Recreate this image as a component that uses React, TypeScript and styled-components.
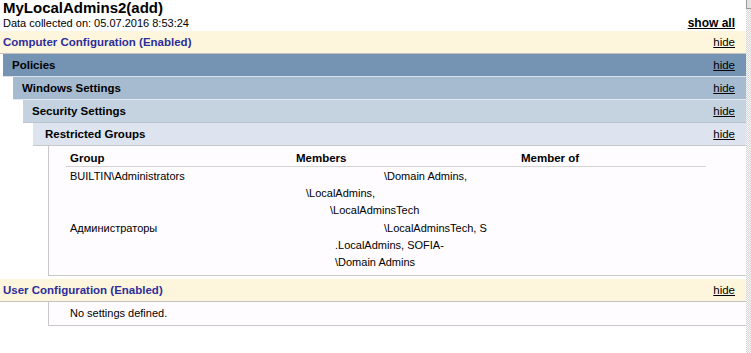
import React from 'react';
import styled, { createGlobalStyle } from 'styled-components';

const GlobalStyle = createGlobalStyle`
  html, body {
    margin: 0;
    padding: 0;
    background: #ffffff;
    overflow: hidden;
  }
  body {
    font-family: 'Liberation Sans', Arial, sans-serif;
    font-size: 11px;
    color: #000000;
  }
`;

const Page = styled.div`
  display: flex;
  width: 751px;
  height: 353px;
  overflow: hidden;
`;

const Report = styled.div`
  flex: 1;
  display: flex;
  flex-direction: column;
  min-width: 0;
`;

const ScrollTrack = styled.div`
  width: 5px;
  display: flex;
  flex-direction: column;
  background-color: #f4f4f4;
  background-image: repeating-conic-gradient(#d6d6d6 0% 25%, #f7f7f7 0% 50%);
  background-size: 2px 2px;
`;

const ScrollButton = styled.div`
  height: 8px;
  background: #e2e2e2;
  border-left: 1px solid #9a9a9a;
  border-bottom: 1px solid #9a9a9a;
`;

const Title = styled.div`
  font-size: 15px;
  font-weight: bold;
  line-height: 16px;
  padding-left: 3px;
  color: #000;
`;

const MetaRow = styled.div`
  display: flex;
  justify-content: space-between;
  align-items: flex-end;
  height: 14px;
  padding: 0 11px 0 3px;
  line-height: 14px;
`;

const ShowAll = styled.a`
  font-weight: bold;
  font-size: 12px;
  color: #000;
  text-decoration: underline;
`;

const Heading = styled.div<{ $indent: number; $bg: string; $pad: number; $tone?: string }>`
  display: flex;
  justify-content: space-between;
  align-items: center;
  height: 22px;
  margin-left: ${(p) => p.$indent}px;
  padding: 0 11px 0 ${(p) => p.$pad}px;
  background: ${(p) => p.$bg};
  border-bottom: 1px solid ${(p) => p.$tone || '#c4c4c4'};
  font-weight: bold;
  font-size: 11.5px;
`;

const Label = styled.span<{ $color?: string }>`
  color: ${(p) => p.$color || '#000'};
`;

const Hide = styled.a`
  font-weight: normal;
  font-size: 11.5px;
  color: #000;
  text-decoration: underline;
`;

const Section = styled.div<{ $gap?: number }>`
  margin-top: ${(p) => p.$gap || 0}px;
  display: flex;
  flex-direction: column;
`;

const Body = styled.div`
  margin-left: 48px;
  background: #fffcff;
  border-left: 1px solid #c8c8c8;
  border-bottom: 1px solid #c8c8c8;
  padding: 4px 0 4px 17px;
`;

const Table = styled.div`
  display: grid;
  grid-template-columns: 226px 225px 1fr;
  margin-right: 40px;
`;

const HeadCell = styled.div`
  font-weight: bold;
  font-size: 11.5px;
  line-height: 16px;
  padding: 0 0 0 4px;
  border-bottom: 1px solid #d4d4d4;
`;

const Cell = styled.div`
  padding: 1px 0 0 4px;
  line-height: 17px;
  white-space: nowrap;
`;

const Redacted = styled.span<{ $w: number }>`
  display: inline-block;
  width: ${(p) => p.$w}px;
`;

const Empty = styled.div`
  line-height: 15px;
  padding: 0 0 0 4px;
`;

const colors = {
  top: '#fef6dc',
  l1: '#7594b4',
  l2: '#a6bbd0',
  l3: '#c5d3e0',
  l4: '#dde4ef',
  link: '#2d2d9c',
};

const App: React.FC = () => {
  return (
    <React.Fragment>
      <GlobalStyle />
      <Page>
        <Report>
          <Title>MyLocalAdmins2(add)</Title>
          <MetaRow>
            <span>Data collected on: 05.07.2016 8:53:24</span>
            <ShowAll>show all</ShowAll>
          </MetaRow>
          <Section $gap={1}>
            <Heading $indent={0} $pad={3} $bg={colors.top} $tone="#c2c2c2">
              <Label $color={colors.link}>Computer Configuration (Enabled)</Label>
              <Hide>hide</Hide>
            </Heading>
            <Heading $indent={3} $pad={9} $bg={colors.l1} $tone="#dbe3ec">
              <Label>Policies</Label>
              <Hide>hide</Hide>
            </Heading>
            <Heading $indent={13} $pad={9} $bg={colors.l2} $tone="#e2e8f0">
              <Label>Windows Settings</Label>
              <Hide>hide</Hide>
            </Heading>
            <Heading $indent={23} $pad={9} $bg={colors.l3} $tone="#b9c4cf">
              <Label>Security Settings</Label>
              <Hide>hide</Hide>
            </Heading>
            <Heading $indent={33} $pad={12} $bg={colors.l4} $tone="#c8c8c8">
              <Label>Restricted Groups</Label>
              <Hide>hide</Hide>
            </Heading>
            <Body>
              <Table>
                <HeadCell>Group</HeadCell>
                <HeadCell>Members</HeadCell>
                <HeadCell>Member of</HeadCell>
                <Cell>BUILTIN\Administrators</Cell>
                <Cell>
                  <Redacted $w={88} />\Domain Admins,
                  <br />
                  <Redacted $w={10} />\LocalAdmins,
                  <br />
                  <Redacted $w={34} />\LocalAdminsTech
                </Cell>
                <Cell />
                <Cell>Администраторы</Cell>
                <Cell>
                  <Redacted $w={88} />\LocalAdminsTech, S
                  <br />
                  <Redacted $w={39} />.LocalAdmins, SOFIA-
                  <br />
                  <Redacted $w={39} />\Domain Admins
                </Cell>
                <Cell />
              </Table>
            </Body>
          </Section>
          <Section $gap={3}>
            <Heading $indent={0} $pad={3} $bg={colors.top} $tone="#c2c2c2">
              <Label $color={colors.link}>User Configuration (Enabled)</Label>
              <Hide>hide</Hide>
            </Heading>
            <Body>
              <Empty>No settings defined.</Empty>
            </Body>
          </Section>
        </Report>
        <ScrollTrack>
          <ScrollButton />
        </ScrollTrack>
      </Page>
    </React.Fragment>
  );
};

export default App;
